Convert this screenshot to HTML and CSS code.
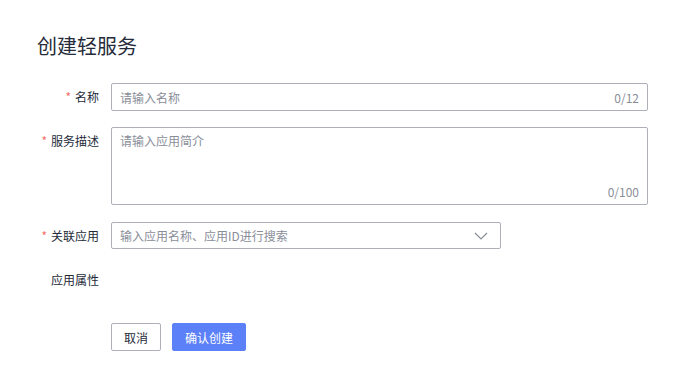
FILE: index.html
```html
<!DOCTYPE html>
<html lang="zh-CN">
<head>
<meta charset="utf-8">
<link rel="stylesheet" href="styles.css">
</head>
<body>
<div class="page">
  <h1 class="title">创建轻服务</h1>
  <form class="form">
    <div class="row">
      <label class="label"><span class="req">*</span>名称</label>
      <div class="control input">
        <span class="ph">请输入名称</span>
        <span class="count">0/12</span>
      </div>
    </div>
    <div class="row row-textarea">
      <label class="label"><span class="req">*</span>服务描述</label>
      <div class="control textarea">
        <span class="ph">请输入应用简介</span>
        <span class="count count-bottom">0/100</span>
      </div>
    </div>
    <div class="row">
      <label class="label"><span class="req">*</span>关联应用</label>
      <div class="control input select">
        <span class="ph">输入应用名称、应用ID进行搜索</span>
        <svg class="chev" width="14" height="8" viewBox="0 0 14 8"><path d="M1 1 L7 7 L13 1" fill="none" stroke="#8a8e99" stroke-width="1.2"/></svg>
      </div>
    </div>
    <div class="row row-plain">
      <label class="label">应用属性</label>
      <div class="control"></div>
    </div>
    <div class="actions">
      <button type="button" class="btn btn-default">取消</button>
      <button type="button" class="btn btn-primary">确认创建</button>
    </div>
  </form>
</div>
</body>
</html>
```
FILE: styles.css
```css
* { box-sizing: border-box; }
html, body { margin: 0; padding: 0; background: #fff; }
body {
  font-family: "Noto Sans CJK SC", "Noto Sans", sans-serif;
  font-size: 12px;
  color: #252b3a;
}
.page { padding: 32px 37px 0 37px; }
.title {
  margin: 0;
  font-size: 20px;
  font-weight: normal;
  line-height: 28px;
  color: #252b3a;
}
.form { margin-top: 23px; }
.row { display: flex; align-items: flex-start; margin-bottom: 16px; }
.row-textarea { margin-bottom: 17px; }
.label {
  width: 62px;
  flex: none;
  text-align: right;
  line-height: 28px;
  color: #252b3a;
}
.req { color: #f66f6a; margin-right: 4px; }
.control { margin-left: 12px; }
.input, .textarea {
  position: relative;
  border: 1px solid #adb0b8;
  border-radius: 2px;
  width: 537px;
  display: flex;
  align-items: center;
  padding: 0 8px;
}
.input { height: 28px; }
.ph { color: #8a8e99; }
.count { color: #8a8e99; margin-left: auto; }
.textarea {
  height: 78px;
  align-items: flex-start;
  padding-top: 3px;
  line-height: 20px;
}
.count-bottom { position: absolute; right: 8px; bottom: 2px; }
.select { width: 390px; height: 27px; }
.chev { margin-left: auto; margin-right: 4px; }
.row-plain { margin-bottom: 29px; }
.row-plain .label { line-height: 28px; }
.actions { display: flex; gap: 11px; padding-left: 74px; }
.btn {
  font-family: inherit;
  font-size: 12px;
  height: 28px;
  border-radius: 2px;
  padding: 0;
  cursor: pointer;
}
.btn-default {
  width: 50px;
  background: #fff;
  border: 1px solid #adb0b8;
  color: #252b3a;
}
.btn-primary {
  width: 74px;
  background: #5b80f7;
  border: 1px solid #5b80f7;
  color: #fff;
}
```
